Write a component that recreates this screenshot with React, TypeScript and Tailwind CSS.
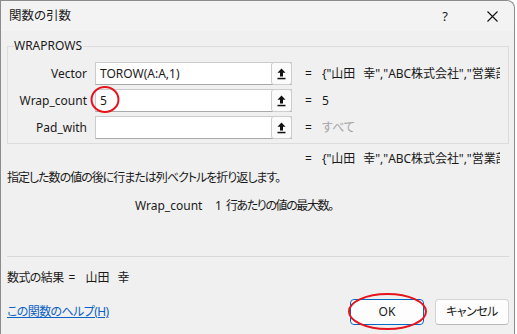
import React from "react";

const font = "font-['Noto_Sans','Noto_Sans_CJK_JP',sans-serif] [font-feature-settings:'palt']";

function UpButton() {
  return (
    <div className="w-[21px] h-[23px] -my-px -mr-px border border-[#cdcdcd] rounded-[3px] bg-[#fbfbfb] flex items-center justify-center">
      <svg width="9" height="12" viewBox="0 0 9 12">
        <path d="M4.5 0.5 L8.5 4.8 H6 V8.5 H3 V4.8 H0.5 Z" fill="#111" />
        <rect x="0.5" y="9.8" width="8" height="1.5" fill="#111" />
      </svg>
    </div>
  );
}

function ArgRow({ label, value, result, gray }: { label: string; value: string; result: string; gray?: boolean }) {
  return (
    <div className="h-[23px] flex items-center">
      <div className="w-[79px] text-right whitespace-nowrap">{label}</div>
      <div className="ml-[8px] w-[197px] h-[23px] flex items-center bg-white border border-[#cbcbcb] border-b-[#a8a8a8]">
        <div className="flex-1 pl-[4px] whitespace-nowrap overflow-hidden">{value}</div>
        <UpButton />
      </div>
      <div className="ml-[13px] w-[17px]">=</div>
      <div className={"w-[178px] overflow-hidden whitespace-nowrap tracking-[-0.05px] [word-spacing:5px] " + (gray ? "text-[#a3a3a3]" : "")}>{result}</div>
    </div>
  );
}

export default function App() {
  const arr = "{\"山田 幸\",\"ABC株式会社\",\"営業部\",\"東京都\"}";
  return (
    <div className={"w-[517px] h-[334px] bg-white overflow-hidden relative text-[12px] leading-[18px] text-[#1a1a1a] " + font}>
      <div className="w-[515px] h-[334px] border-l border-r border-t border-[#8c8c8c] rounded-tr-[8px] bg-[#f0f0f0] flex flex-col overflow-hidden">
        <div className="h-[30px] shrink-0 bg-[#f3f3f3] flex items-center pl-[8px] rounded-tr-[8px]">
          <div className="text-[12.5px]">関数の引数</div>
          <div className="ml-auto w-[12px] text-center text-[13px] mr-[36px]">?</div>
          <div className="mr-[16px] flex items-center">
            <svg width="11" height="11" viewBox="0 0 11 11">
              <path d="M0.5 0.5 L10.5 10.5 M10.5 0.5 L0.5 10.5" stroke="#111" strokeWidth="1.1" />
            </svg>
          </div>
        </div>
        <div className="pl-[6px] flex flex-col">
          <div className="relative mt-[15px] w-[502px] h-[98px] border border-[#dcdcdc] pt-[15px] flex flex-col gap-[4px]">
            <div className="absolute left-[6px] top-[-10px] bg-[#f0f0f0] pr-[1px] leading-[18px]">WRAPROWS</div>
            <ArgRow label="Vector" value="TOROW(A:A,1)" result={arr} />
            <ArgRow label="Wrap_count" value="5" result="5" />
            <ArgRow label="Pad_with" value="" result="すべて" gray />
          </div>
          <div className="mt-[6px] h-[18px] flex items-center">
            <div className="ml-[298px] w-[17px]">=</div>
            <div className="w-[178px] overflow-hidden whitespace-nowrap tracking-[-0.05px] [word-spacing:5px]">{arr}</div>
          </div>
          <div className="mt-[1px] h-[18px] flex items-center whitespace-nowrap tracking-[-1px]">
            指定した数の値の後に行または列ベクトルを折り返します。
          </div>
          <div className="mt-[10px] h-[18px] flex items-center whitespace-nowrap">
            <div className="ml-[128px] w-[80px]">Wrap_count</div>
            <div>1</div>
            <div className="ml-[4px] tracking-[-1.4px]">行あたりの値の最大数。</div>
          </div>
          <div className="mt-[41px] w-[502px] h-px bg-[#d9d9d9]" />
          <div className="mt-[12px] h-[18px] flex items-center whitespace-nowrap">
            <span className="tracking-[-0.6px]">数式の結果</span>
            <span className="ml-[5px]">=</span>
            <span className="ml-[10px] [word-spacing:5px]">山田 幸</span>
          </div>
          <div className="mt-[12px] w-[502px] h-[26px] flex items-center">
            <a className="text-[#0b62c4] underline whitespace-nowrap cursor-pointer tracking-[-0.6px]">この関数のヘルプ(H)</a>
            <div className="ml-auto flex gap-[11px]">
              <div className="w-[74px] h-[26px] rounded-[4px] border border-[#0067c0] bg-[#fdfdfd] flex items-center justify-center">OK</div>
              <div className="w-[74px] h-[26px] rounded-[4px] border border-[#d3d3d3] border-b-[#b8b8b8] bg-[#fdfdfd] flex items-center justify-center tracking-[-0.5px]">キャンセル</div>
            </div>
          </div>
        </div>
      </div>
      <svg className="absolute left-0 top-0 pointer-events-none" width="517" height="334">
        <ellipse cx="105" cy="99.5" rx="13.5" ry="12.5" fill="none" stroke="#e5131c" strokeWidth="2" />
        <ellipse cx="387.5" cy="311.5" rx="38.5" ry="17.5" fill="none" stroke="#e5131c" strokeWidth="2" />
      </svg>
    </div>
  );
}
